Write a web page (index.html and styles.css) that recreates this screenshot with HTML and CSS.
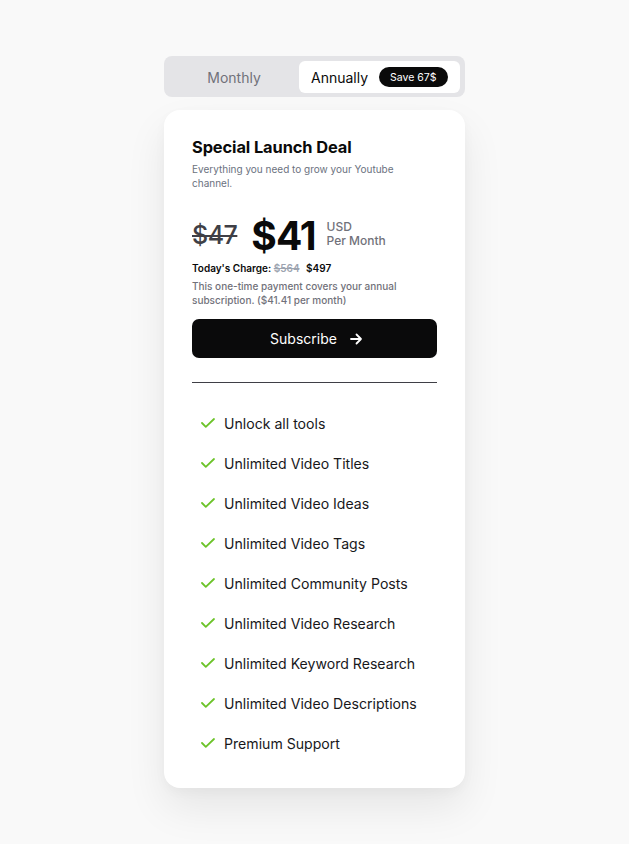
FILE: index.html
```html
<!DOCTYPE html>
<html lang="en">
<head>
<meta charset="utf-8">
<link rel="stylesheet" href="styles.css">
</head>
<body>
<main class="wrap">
  <div class="toggle">
    <div class="tab">Monthly</div>
    <div class="tab active">Annually <span class="badge">Save 67$</span></div>
  </div>
  <section class="card">
    <h1 class="title">Special Launch Deal</h1>
    <p class="sub">Everything you need to grow your Youtube channel.</p>
    <div class="price-row">
      <span class="old">$47</span>
      <span class="new">$41</span>
      <span class="unit">USD<br>Per Month</span>
    </div>
    <p class="charge">Today's Charge: <s class="strike">$564</s> $497</p>
    <p class="note">This one-time payment covers your annual subscription. ($41.41 per month)</p>
    <button class="btn">Subscribe
      <svg width="14" height="14" viewBox="0 0 14 14" fill="none" stroke="#fff" stroke-width="1.8" stroke-linecap="round" stroke-linejoin="round"><path d="M2 7h10M7.5 2.5 12 7l-4.5 4.5"/></svg>
    </button>
    <hr class="divider">
    <ul class="features">
      <li><svg class="chk" viewBox="0 0 14 10"><path d="M1 5l3.8 3.8L13 1"/></svg>Unlock all tools</li>
      <li><svg class="chk" viewBox="0 0 14 10"><path d="M1 5l3.8 3.8L13 1"/></svg>Unlimited Video Titles</li>
      <li><svg class="chk" viewBox="0 0 14 10"><path d="M1 5l3.8 3.8L13 1"/></svg>Unlimited Video Ideas</li>
      <li><svg class="chk" viewBox="0 0 14 10"><path d="M1 5l3.8 3.8L13 1"/></svg>Unlimited Video Tags</li>
      <li><svg class="chk" viewBox="0 0 14 10"><path d="M1 5l3.8 3.8L13 1"/></svg>Unlimited Community Posts</li>
      <li><svg class="chk" viewBox="0 0 14 10"><path d="M1 5l3.8 3.8L13 1"/></svg>Unlimited Video Research</li>
      <li><svg class="chk" viewBox="0 0 14 10"><path d="M1 5l3.8 3.8L13 1"/></svg>Unlimited Keyword Research</li>
      <li><svg class="chk" viewBox="0 0 14 10"><path d="M1 5l3.8 3.8L13 1"/></svg>Unlimited Video Descriptions</li>
      <li><svg class="chk" viewBox="0 0 14 10"><path d="M1 5l3.8 3.8L13 1"/></svg>Premium Support</li>
    </ul>
  </section>
</main>
</body>
</html>
```
FILE: styles.css
```css
* { box-sizing: border-box; }
html, body { margin: 0; padding: 0; }
body {
  background: #f9f9f9;
  font-family: Inter, "Noto Sans", sans-serif;
  color: #0a0a0a;
  width: 629px;
  height: 844px;
  overflow: hidden;
}
.wrap {
  width: 301px;
  margin: 56px 0 0 164px;
  display: flex;
  flex-direction: column;
  gap: 13px;
}
.toggle {
  height: 41px;
  background: #e4e4e7;
  border-radius: 8px;
  padding: 5px 5px 4px 5px;
  display: flex;
}
.tab {
  flex: 1;
  display: flex;
  align-items: center;
  justify-content: center;
  font-size: 14px;
  color: #71717a;
  border-radius: 6px;
}
.tab.active {
  flex: 0 0 161px;
  background: #fff;
  color: #0a0a0a;
  gap: 11px;
  justify-content: flex-start;
  padding-left: 12px;
}
.badge {
  background: #0a0a0a;
  color: #fff;
  font-size: 10.5px;
  height: 20px;
  padding: 0 11px;
  border-radius: 10px;
  display: inline-flex;
  align-items: center;
}
.card {
  background: #fff;
  border-radius: 16px;
  padding: 26px 28px 35px;
  box-shadow: 0 20px 40px rgba(0,0,0,0.08), 0 4px 12px rgba(0,0,0,0.03);
}
.title {
  margin: 0;
  font-size: 16.4px;
  font-weight: 700;
  line-height: 22px;
  letter-spacing: -0.1px;
}
.sub {
  margin: 4px 0 0;
  font-size: 10px;
  line-height: 14px;
  color: #6b7280;
  padding-right: 40px;
}
.price-row {
  display: flex;
  align-items: center;
  margin-top: 24px;
  height: 42px;
}
.old {
  font-size: 25px;
  color: #3f3f46;
  text-decoration: line-through;
  text-decoration-thickness: 2px;
  font-weight: 500;
  letter-spacing: -0.5px;
}
.new {
  font-size: 39px;
  font-weight: 700;
  margin-left: 14px;
  letter-spacing: -1px;
}
.unit {
  margin-left: 11px;
  font-size: 12px;
  line-height: 14px;
  color: #71717a;
  font-weight: 500;
  padding-bottom: 2px;
}
.charge {
  margin: 5px 0 0;
  font-size: 10px;
  font-weight: 600;
  line-height: 14px;
}
.strike {
  color: #9ca3af;
  margin-right: 4px;
}
.note {
  margin: 4px 0 0;
  font-size: 10px;
  line-height: 14px;
  color: #71717a;
  font-weight: 500;
}
.btn {
  margin-top: 12px;
  width: 100%;
  height: 39px;
  border: 0;
  border-radius: 7px;
  background: #0a0a0b;
  color: #fff;
  font-family: inherit;
  font-size: 14px;
  display: flex;
  align-items: center;
  justify-content: center;
  gap: 12px;
  padding: 0 0 0 4px;
}
.divider {
  margin: 24px 0 0;
  border: 0;
  border-top: 1px solid #3f3f46;
}
.features {
  list-style: none;
  margin: 30px 0 0;
  padding: 0 0 0 9px;
  display: flex;
  flex-direction: column;
  gap: 20px;
}
.features li {
  display: flex;
  align-items: center;
  height: 20px;
  font-size: 14.1px;
  color: #18181b;
}
.chk {
  width: 14px;
  height: 10px;
  margin-right: 9px;
  fill: none;
  stroke: #6cc329;
  stroke-width: 1.8;
  stroke-linecap: round;
  stroke-linejoin: round;
}
```
